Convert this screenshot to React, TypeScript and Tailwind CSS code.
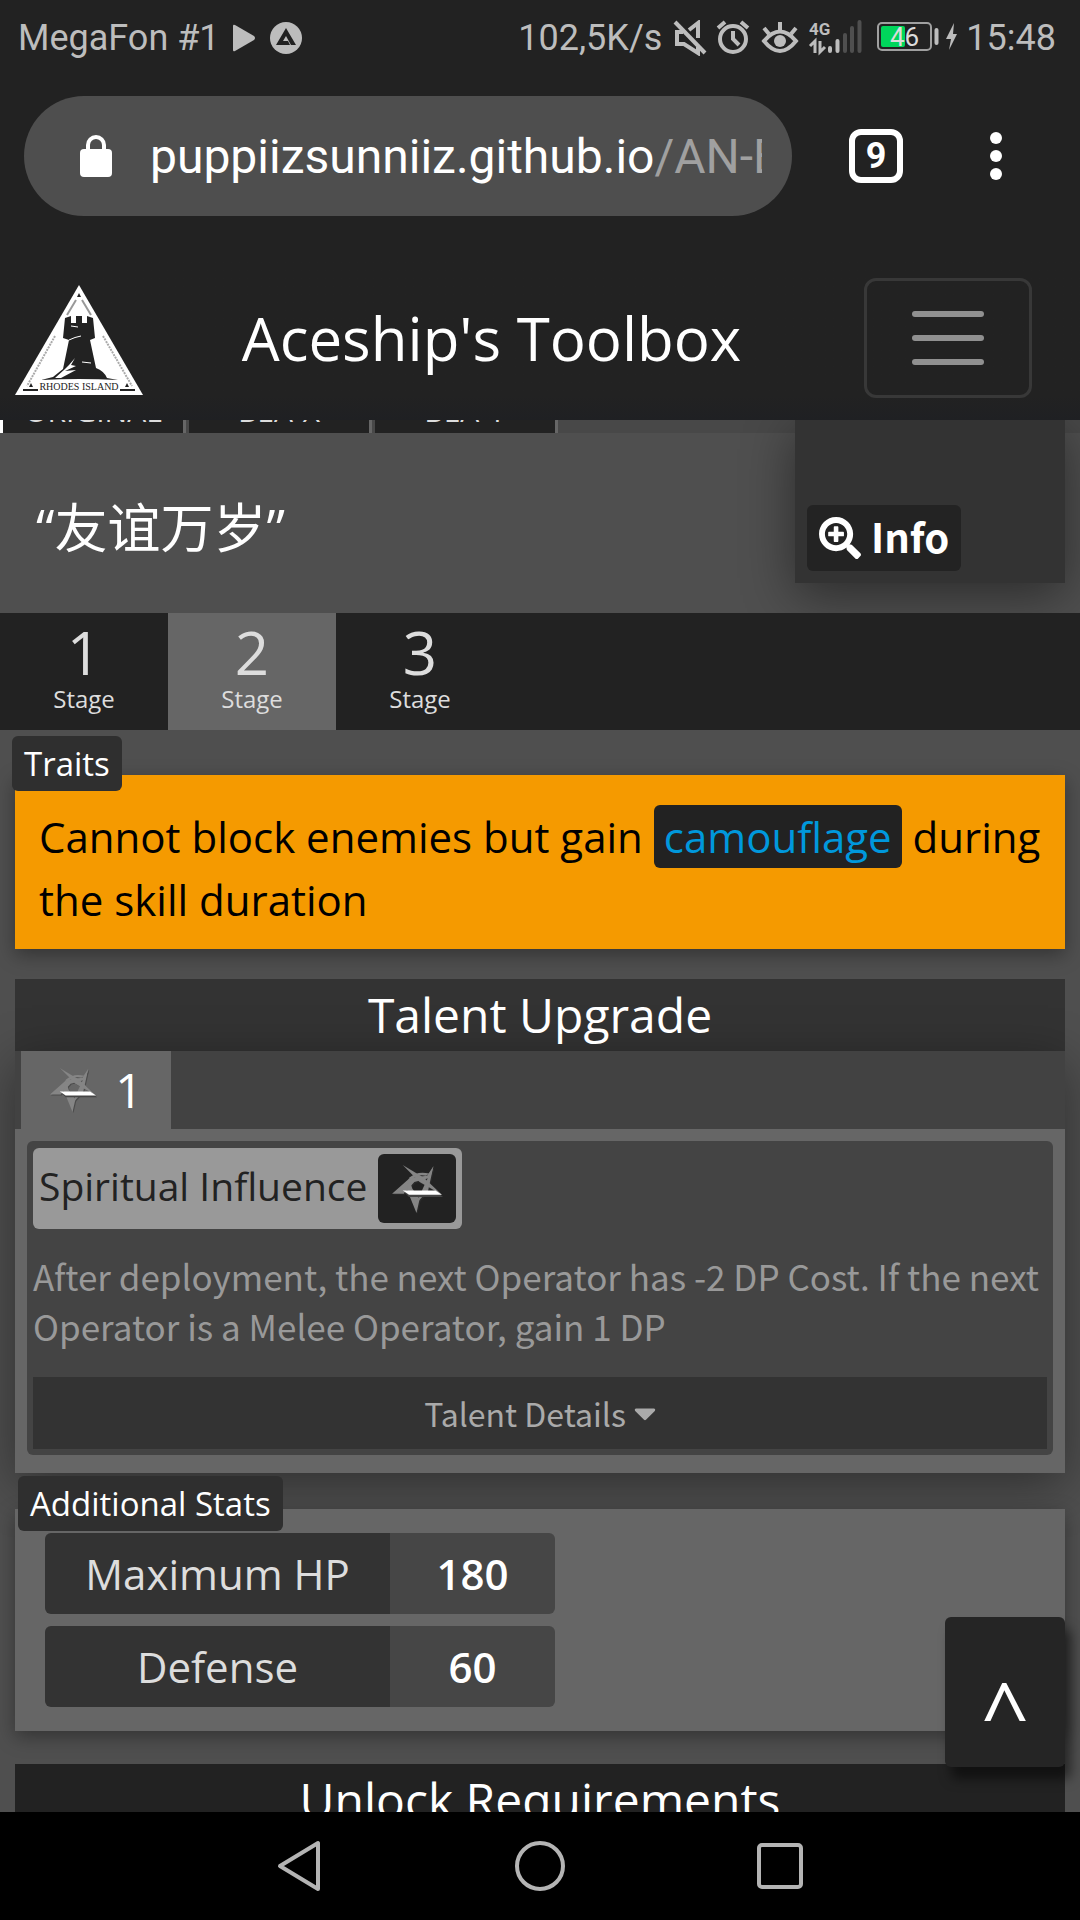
import { useState } from 'react';
import type { ReactNode } from 'react';
import { FaCaretDown, FaSearchPlus } from 'react-icons/fa';

/** 干员皮肤标签 */
const SKINS = ['ORIGINAL', 'BEA-X', 'BEA-Y'];

/** 潜能附加属性 */
const STATS = [
  { name: 'Maximum HP', value: 180 },
  { name: 'Defense', value: 60 },
];

/* ---------- 图标 ---------- */

function StatusIcons() {
  return (
    <svg width="288" height="36" viewBox="670 19 288 36" fill="none" stroke="#bdbdbd" aria-hidden="true">
      {/* 静音 */}
      <path d="M675 21 L705 52" strokeWidth="4" />
      <path d="M683 31 H677 V43 H684 L698 52 V46 M689 29 L698 22 V37" strokeWidth="4" />
      {/* 闹钟 */}
      <circle cx="733" cy="38" r="13" strokeWidth="4" />
      <path d="M733 30 V38 L739 44 M718 27 L725 21 M748 27 L741 21" strokeWidth="4" />
      {/* 护眼模式 */}
      <path d="M764 40 Q780 21 796 40 Q780 60 764 40 Z" strokeWidth="4" />
      <circle cx="780" cy="40" r="6" fill="#bdbdbd" stroke="none" />
      <path d="M780 29 V21 M769 33 L764 27 M791 33 L796 27" strokeWidth="4" />
      {/* 信号 */}
      <text x="809" y="34" fontSize="17" fontWeight="700" fontFamily="Roboto, sans-serif" fill="#bdbdbd" stroke="none">
        4G
      </text>
      <path d="M810 45 L815 40 V52 M820 40 V51 L825 46" strokeWidth="3" />
      <path d="M830 47 V50 M837.500 40 V50" strokeWidth="4" strokeLinecap="round" />
      <path d="M845 34 V50 M852 27 V50 M859.500 21 V50" strokeWidth="4" strokeLinecap="round" stroke="#4f4f4f" />
      {/* 电池 */}
      <rect x="878" y="22" width="53" height="27" rx="4" strokeWidth="2" stroke="#a0a0a0" />
      <rect x="881" y="25" width="24" height="21" rx="2" fill="#00d65b" stroke="none" />
      <path d="M936.500 29 V42" strokeWidth="4" strokeLinecap="round" />
      <text x="890" y="45" fontSize="26" fontFamily="Roboto, sans-serif" fill="#dcdcdc" stroke="none">
        46
      </text>
      <path d="M954 22 L946 38 H951 L949 49 L957 33 H953 Z" fill="#bdbdbd" stroke="none" />
    </svg>
  );
}

function RhodesLogo() {
  return (
    <svg className="block" width="128" height="110" viewBox="0 0 128 110" role="img" aria-label="Rhodes Island">
      <path d="M64 0 L128 110 H0 Z" fill="#fff" />
      <path d="M64 8 L66 12 H62 Z M16 98 L18 102 H14 Z M112 98 L114 102 H110 Z" fill="#222" />
      <path d="M61 15 L52 30 M67 15 L76 30" stroke="#999" strokeWidth="2" />
      <path d="M40 51 L12 101 M88 51 L117 101" stroke="#aaa" strokeWidth="2" strokeDasharray="2 1" />
      {/* 城堡 */}
      <path
        d="M50 33 L56 31 V38 H61 V31 H67 V38 H72 V31 L78 33 L80 53 L75 55 L81 83 Q89 86 92 93 L103 95 Q64 93 26 95 L38 92 L48 84 L54 55 L48 53 Z"
        fill="#222"
      />
      <path d="M54 55 Q60 52 66 51 M56 41 L63 42 M67 77 L76 78" stroke="#fff" strokeWidth="1" fill="none" />
      <path d="M60 73 L56 80 L61 81 L50 86 L61 85 L46 93 L40 93 L50 84 L54 80 Z" fill="#fff" />
      <path d="M8 105 H23 M105 105 H120" stroke="#222" strokeWidth="2" />
      <text x="64" y="105" textAnchor="middle" fontSize="10" fontFamily="Liberation Serif, serif" fill="#222">
        RHODES ISLAND
      </text>
    </svg>
  );
}

/** 倒五角星，细长的刀刃状边互相交叉，中间镂空 */
function PotentialIcon({ className }: { className: string }) {
  const blades = [
    'M11 2 L31 14 L48 30 L27 18 Z',
    'M1 29 L18 14 L34 12 L40 3 L37 14 L22 18 L12 29 Z',
    'M40 3 L35 26 L24 38 L30 24 Z',
    'M24 47 L15 25 L17 14 L20 24 L27 34 Z',
    'M17 14 Q25 7 36 10 L33 12 Q25 10 19 16 Z',
  ];
  return (
    <svg className={className} viewBox="0 0 49 49" aria-hidden="true">
      <g transform="translate(1 1)" fill="#333" opacity="0.500">
        {blades.map((d) => <path key={d} d={d} />)}
      </g>
      <g fill="#858585">
        {blades.map((d) => <path key={d} d={d} />)}
      </g>
      <path d="M12 27 H43 L49 32 H17 Z" fill="#444" />
      <path d="M11 26 H42 L48 30 H17 Z" fill="#fff" />
    </svg>
  );
}

/* ---------- 页面区块 ---------- */

function SectionBadge({ className, children }: { className: string; children: ReactNode }) {
  return (
    <h3 className={`absolute rounded-md bg-[#2f2f2f] px-3 text-[33px] leading-[55px] text-white ${className}`}>
      {children}
    </h3>
  );
}

function BrowserBar() {
  return (
    <header className="bg-[#222] font-['Roboto',sans-serif]">
      <div className="flex h-[72px] items-center justify-between px-[18px] pt-1 pr-6 text-4xl text-[#bdbdbd]">
        <div className="flex items-center gap-2.5">
          <span>MegaFon #1</span>
          <svg width="72" height="34" viewBox="0 0 72 34" fill="#bdbdbd" aria-hidden="true">
            <path d="M3 5 Q3 3 5 4 L24 15 Q26 17 24 19 L5 30 Q3 31 3 29 Z" />
            <circle cx="56" cy="17" r="16" />
            <path d="M46 24 L56 7 L66 24 H61 L56 15 L53 20 H58 L60 24 Z" fill="#222" />
          </svg>
        </div>
        <div className="flex items-center gap-2">
          <span>102,5K/s</span>
          <StatusIcons />
          <span>15:48</span>
        </div>
      </div>

      <div className="flex items-center px-6 pt-6 pb-10">
        <button type="button" className="flex h-[120px] min-w-0 flex-1 items-center gap-[38px] rounded-full bg-[#4e4e4e] pr-[30px] pl-14">
          <svg className="shrink-0" width="32" height="42" viewBox="0 0 32 42" aria-hidden="true">
            <rect y="14" width="32" height="28" rx="4" fill="#fff" />
            <path d="M8 15 V10 A8 8 0 0 1 24 10 V15" fill="none" stroke="#fff" strokeWidth="4" />
          </svg>
          <span className="min-w-0 overflow-hidden pt-0.5 text-left text-5xl leading-[60px] whitespace-nowrap text-white">
            puppiizsunniiz.github.io<span className="text-[#a0a0a0]">/AN-EN-Tags</span>
          </span>
        </button>
        <button type="button" aria-label="标签页" className="mx-[57px] flex size-[54px] items-center justify-center rounded-xl border-6 border-white text-4xl font-bold text-white">
          9
        </button>
        <button type="button" aria-label="菜单" className="mr-[54px] ml-[30px] flex flex-col gap-1.5">
          <span className="size-3 rounded-full bg-white" />
          <span className="size-3 rounded-full bg-white" />
          <span className="size-3 rounded-full bg-white" />
        </button>
      </div>
    </header>
  );
}

function Navbar() {
  return (
    <nav className="flex h-[164px] items-center justify-between bg-linear-to-b from-[#222] from-85% to-[#1f2023] pr-12 pl-[15px]">
      <a href="#home" className="pt-1">
        <RhodesLogo />
      </a>
      <h1 className="pr-6 text-6xl text-white">Aceship's Toolbox</h1>
      <button type="button" aria-label="展开导航" className="flex h-[120px] w-[168px] flex-col items-center justify-center gap-[18px] rounded-xl border-3 border-[#383838]">
        <span className="h-1.5 w-[72px] rounded-full bg-[#909090]" />
        <span className="h-1.5 w-[72px] rounded-full bg-[#909090]" />
        <span className="h-1.5 w-[72px] rounded-full bg-[#909090]" />
      </button>
    </nav>
  );
}

function OperatorHeader() {
  return (
    <section className="relative overflow-hidden">
      {/* 皮肤标签行，滚动后只露出底部 */}
      <div className="flex h-[13px] items-end overflow-hidden border-l-3 border-white bg-[#484848]">
        {SKINS.map((skin) => (
          <button key={skin} type="button" className="mr-[3px] w-[183px] shrink-0 border-r-3 border-[#666] bg-[#222] pb-0.5 text-[30px] leading-10 text-[#ddd]">
            {skin}
          </button>
        ))}
      </div>
      <h2 className="flex h-[180px] items-center px-9 pt-2.5 text-[53px] text-white">“友谊万岁”</h2>
      <div className="absolute top-0 right-[15px] flex h-[163px] w-[270px] items-end bg-[#333] p-3 shadow-[0_12px_48px_rgba(0,0,0,0.45)]">
        <button type="button" className="flex h-[66px] items-center gap-2.5 rounded-md bg-[#232323] px-3 font-['Noto_Sans_CJK_SC',sans-serif] text-[40px] leading-[60px] font-bold text-white">
          <FaSearchPlus className="size-[42px]" />
          <span className="pb-1">Info</span>
        </button>
      </div>
    </section>
  );
}

function StageTabs() {
  const [stage, setStage] = useState(2);

  return (
    <div className="relative flex bg-[#222]">
      {[1, 2, 3].map((n) => (
        <button
          key={n}
          type="button"
          onClick={() => setStage(n)}
          className={`flex h-[117px] w-[168px] flex-col items-center text-[#ddd] ${n === stage ? 'bg-[#666]' : ''}`}
        >
          <span className="pt-1 text-6xl leading-[70px]">{n}</span>
          <span className="text-2xl leading-6">Stage</span>
        </button>
      ))}
    </div>
  );
}

function Traits() {
  return (
    <section className="relative mx-[15px] mt-[45px] bg-[#f59a00] px-6 pt-[30px] pb-[18px] text-[42px] leading-[63px] text-black shadow-[0_6px_18px_rgba(0,0,0,0.35)]">
      <SectionBadge className="-top-[39px] -left-[3px]">Traits</SectionBadge>
      <p>
        Cannot block enemies but gain{' '}
        <span className="inline-block rounded-md bg-[#222] px-2.5 text-[#0098dc]">camouflage</span> during the skill duration
      </p>
    </section>
  );
}

function TalentUpgrade() {
  return (
    <section className="mx-[15px] mt-[30px]">
      <h2 className="bg-[#333] text-center text-5xl leading-[72px] text-white">Talent Upgrade</h2>
      <div className="bg-[#666] shadow-[0_12px_48px_rgba(0,0,0,0.4)]">
        <div className="flex bg-[#424242] px-1.5">
          <button type="button" className="flex h-[78px] w-[150px] items-center justify-center gap-[18px] bg-[#666] text-5xl text-white">
            <PotentialIcon className="size-12" />1
          </button>
        </div>
        <div className="px-3 pt-3 pb-[18px]">
          <div className="rounded-md bg-[#444] px-1.5 pt-[7px] pb-1.5">
            <div className="flex h-[81px] w-fit items-center gap-[11px] rounded-md bg-[#999] px-1.5 text-[39px] text-[#222]">
              <span className="pb-1">Spiritual Influence</span>
              <span className="flex h-[69px] w-[78px] items-center justify-center rounded-md bg-[#222]">
                <PotentialIcon className="size-[52px]" />
              </span>
            </div>
            <p className="pt-[22px] pb-[26px] font-['Noto_Sans_CJK_SC',sans-serif] text-[35px] leading-[50px] text-[#999]">
              After deployment, the next Operator has -2 DP Cost. If the next Operator is a Melee Operator, gain 1 DP
            </p>
            <button type="button" className="flex h-[72px] w-full items-center justify-center gap-2 bg-[#333] font-['Noto_Sans_CJK_SC',sans-serif] text-[32px] text-[#aaa]">
              Talent Details
              <FaCaretDown className="h-9 w-[22px]" />
            </button>
          </div>
        </div>
      </div>
    </section>
  );
}

function AdditionalStats() {
  return (
    <section className="relative mx-[15px] mt-9 bg-[#666] px-[30px] py-3 shadow-[0_6px_18px_rgba(0,0,0,0.35)]">
      <SectionBadge className="-top-[33px] left-[3px]">Additional Stats</SectionBadge>
      <table className="w-[510px] table-fixed border-separate border-spacing-x-0 border-spacing-y-3 text-center text-[42px]">
        <tbody>
          {STATS.map((stat) => (
            <tr key={stat.name} className="h-[81px]">
              <th scope="row" className="w-[345px] rounded-l-md bg-[#333] p-0 font-normal text-[#ddd]">
                {stat.name}
              </th>
              <td className="rounded-r-md bg-[#464646] p-0 font-semibold text-white">{stat.value}</td>
            </tr>
          ))}
        </tbody>
      </table>
    </section>
  );
}

function SystemNav() {
  return (
    <footer className="flex h-[108px] items-center justify-center gap-[190px] bg-black">
      <button type="button" aria-label="返回">
        <svg width="50" height="54" viewBox="0 0 50 54" fill="none" stroke="#b4b4b4" strokeWidth="4" strokeLinejoin="round">
          <path d="M43 4 V50 L5 27 Z" />
        </svg>
      </button>
      <button type="button" aria-label="主页">
        <svg width="50" height="50" viewBox="0 0 50 50" fill="none" stroke="#b4b4b4" strokeWidth="4">
          <circle cx="25" cy="25" r="23" />
        </svg>
      </button>
      <button type="button" aria-label="最近任务">
        <svg width="50" height="50" viewBox="0 0 50 50" fill="none" stroke="#b4b4b4" strokeWidth="4">
          <rect x="4" y="4" width="42" height="42" rx="3" />
        </svg>
      </button>
    </footer>
  );
}

export default function App() {
  return (
    <div className="flex h-screen flex-col bg-[#222] font-['Open_Sans','Noto_Sans_CJK_SC',sans-serif]">
      <BrowserBar />
      <Navbar />
      <main className="relative min-h-0 flex-1 overflow-hidden bg-[#4f4f4f]">
        <OperatorHeader />
        <StageTabs />
        <Traits />
        <TalentUpgrade />
        <AdditionalStats />
        <section className="mx-[15px] mt-[33px] bg-[#222]">
          <h2 className="text-center text-5xl leading-[72px] text-white">Unlock Requirements</h2>
        </section>
        {/* 回到顶部 */}
        <button type="button" aria-label="回到顶部" className="absolute right-[15px] bottom-[45px] h-[150px] w-[120px] rounded-md bg-[#252525] pt-10 text-[84px] leading-[110px] text-white shadow-[6px_12px_12px_rgba(0,0,0,0.5)]">
          ^
        </button>
      </main>
      <SystemNav />
    </div>
  );
}
